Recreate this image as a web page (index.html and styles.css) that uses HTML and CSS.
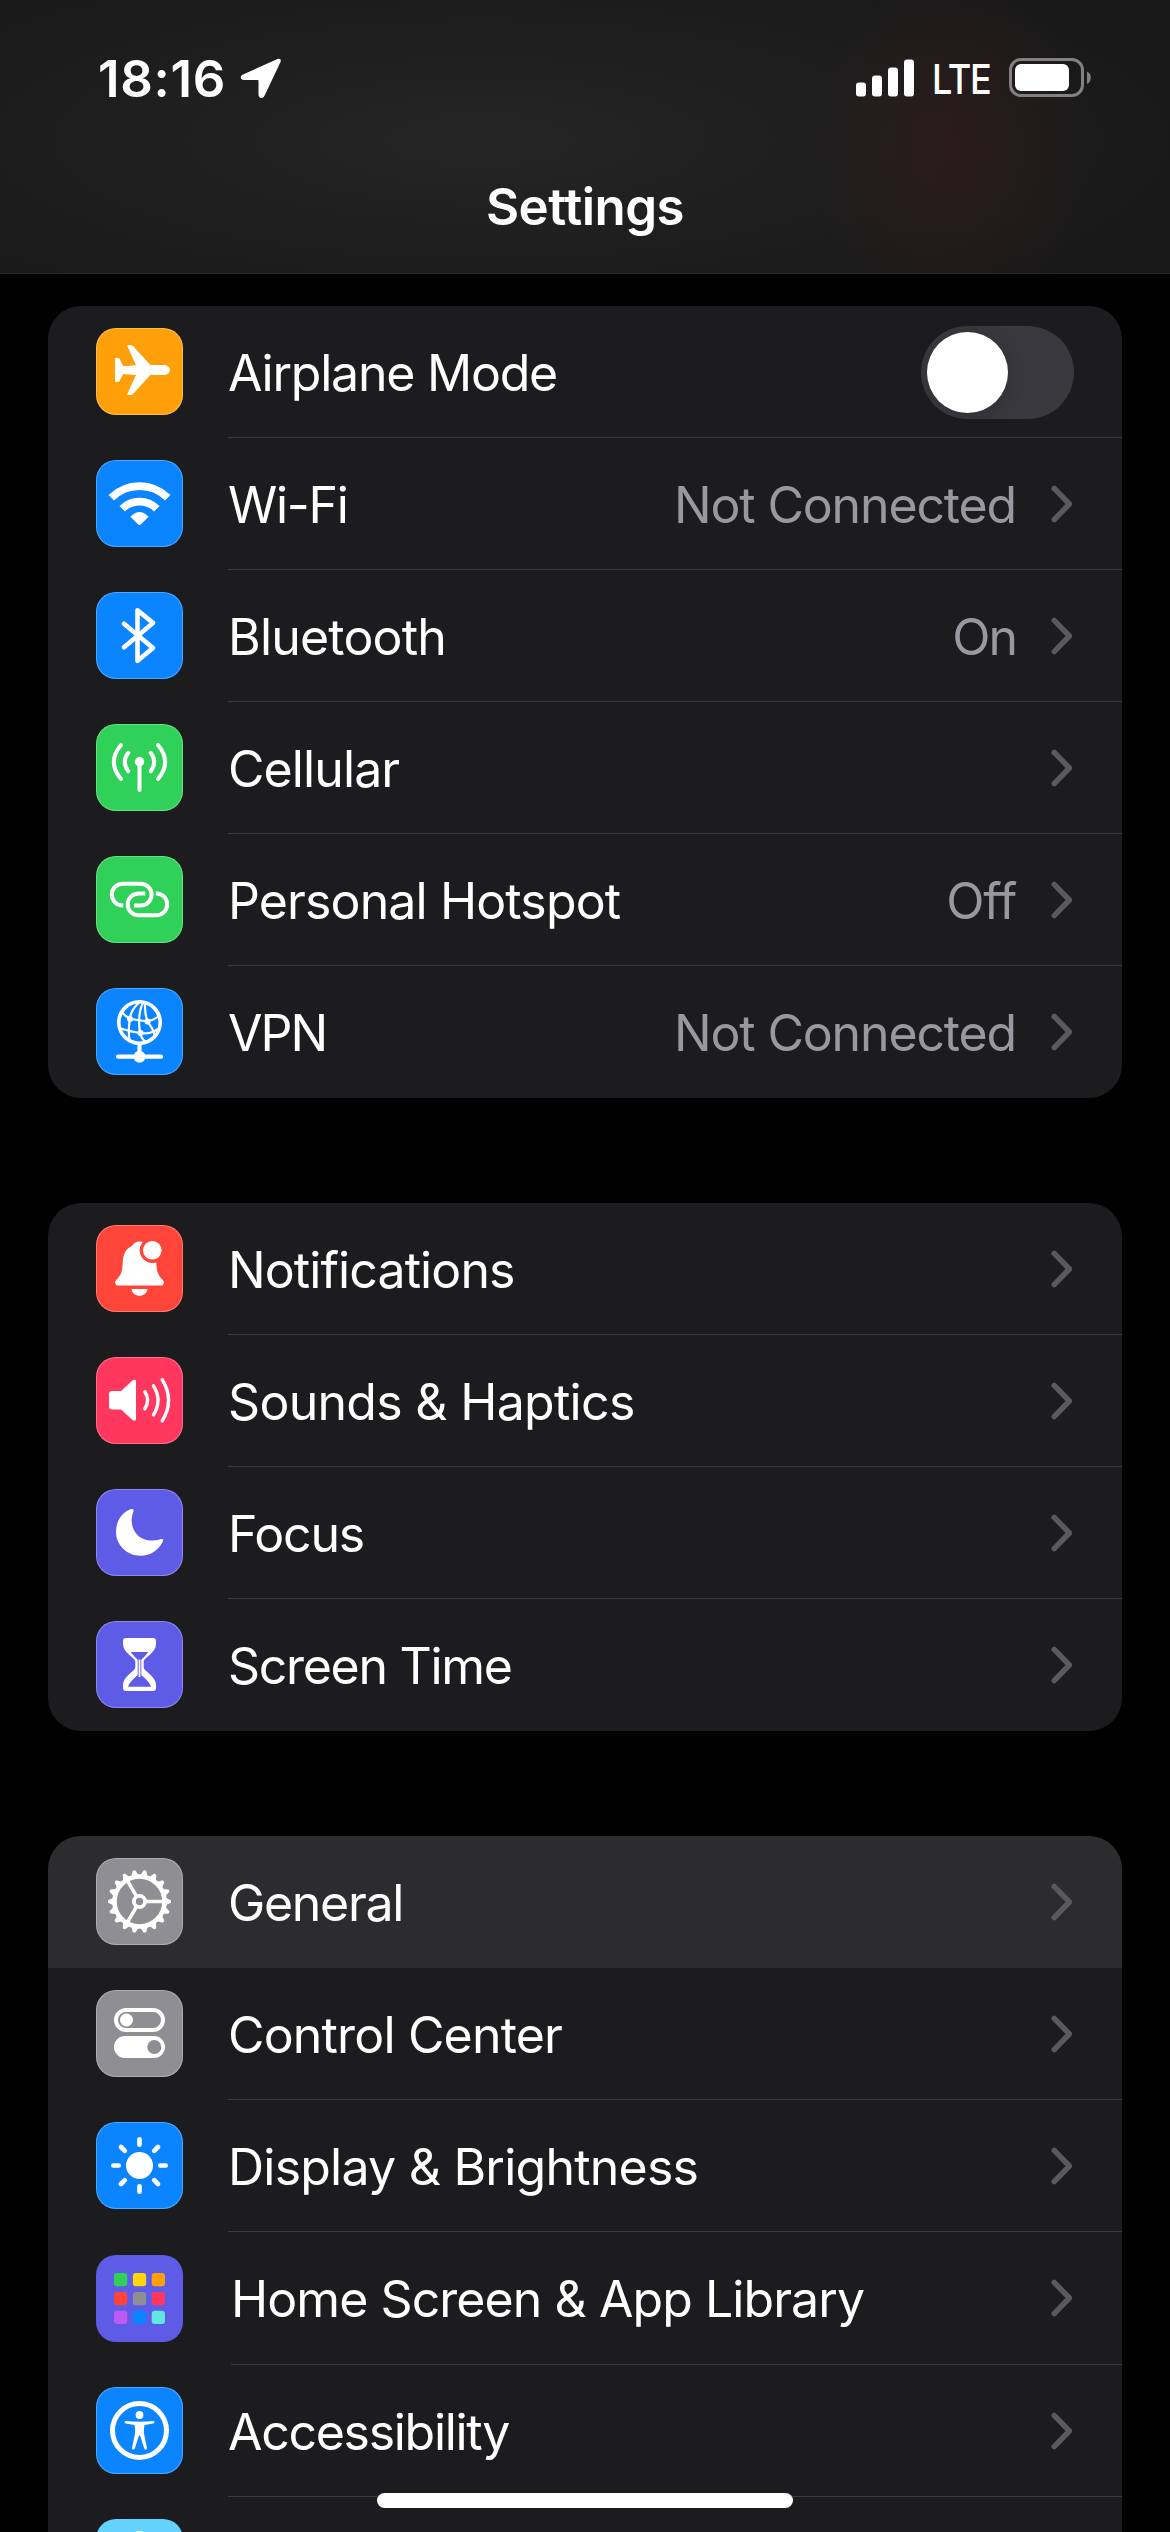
FILE: index.html
```html
<!DOCTYPE html>
<html lang="en">
<head>
<meta charset="utf-8">
<title>Settings</title>
<link rel="stylesheet" href="styles.css">
</head>
<body>
<svg class="defs" aria-hidden="true">
  <symbol id="chevron" viewBox="0 0 22 38"><path d="M3.2 3.400 18.400 19 3.200 34.600" fill="none" stroke="#5a5a5e" stroke-width="5.400" stroke-linecap="round" stroke-linejoin="round"/></symbol>
</svg>
<div class="screen">
  <header class="header">
    <div class="status">
      <span class="time">18:16</span>
      <svg class="location" viewBox="0 0 42 42"><path d="M37.500 2 3 17.500C-.5 19.200.3 23 4 23H17.500c.7 0 1 .3 1 1V37.500c0 4 4.300 4.700 6 1.200L40.500 5c1-2.500-.6-4-3-3Z" fill="#fff"/></svg>
      <svg class="signal" viewBox="0 0 58 38"><g fill="#fff"><rect x="0" y="23.500" width="10" height="14" rx="3"/><rect x="16" y="16.500" width="10" height="21" rx="3"/><rect x="32" y="8.500" width="10" height="29" rx="3"/><rect x="48" y="0.500" width="10" height="37" rx="3"/></g></svg>
      <span class="network">LTE</span>
      <svg class="battery" viewBox="0 0 83 40"><rect x="1.500" y="1.500" width="72" height="36" rx="10.500" fill="none" stroke="#828080" stroke-width="3"/><rect x="6" y="6" width="54" height="27" rx="6" fill="#fff"/><path d="M78 13.500c5 1.500 5 10.500 0 12.500Z" fill="#828080"/></svg>
    </div>
    <h1 class="title">Settings</h1>
  </header>

  <main class="groups">
    <section class="group">
      <div class="row">
        <span class="icon orange"><svg viewBox="0 0 87 87"><path d="M54.300 37H68c3.500 0 6 2.500 6 5s-2.500 5-6 5H54.300L37.500 65.500Q36 67 34 67H32Q31 67 31.400 65.800L40 47 27.300 46 23.500 53Q23 54 21.500 54H20Q19 54 19 53V31Q19 30 20 30h1.500Q23 30 23.500 31L27.300 38.200 40 37.300 31.400 18.200Q31 17 32 17h2q2 0 3.500 1.500Z" fill="#fff"/></svg></span>
        <div class="cell"><span class="label airplane">Airplane Mode</span><span class="toggle"><span class="knob"></span></span></div>
      </div>
      <div class="row">
        <span class="icon blue"><svg viewBox="0 0 87 87"><g fill="none" stroke="#fff" stroke-width="7.800"><path d="M15.300 37.800a40 40 0 0 1 56.400 0"/><path d="M26.200 48.700a24.500 24.500 0 0 1 34.600 0"/></g><path d="M34.400 56.800Q43.500 47.200 52.600 56.800L44.500 64.700q-1 .8-2 0Z" fill="#fff"/></svg></span>
        <div class="cell"><span class="label wifi">Wi-Fi</span><span class="value">Not Connected</span><svg class="chevron"><use href="#chevron"/></svg></div>
      </div>
      <div class="row">
        <span class="icon blue"><svg viewBox="0 0 87 87"><path d="M28 31.800 57 55.900 41.500 68.800V18.200L57 30.900 28 55.200" fill="none" stroke="#fff" stroke-width="4.600" stroke-linecap="round" stroke-linejoin="round"/></svg></span>
        <div class="cell"><span class="label bluetooth">Bluetooth</span><span class="value on">On</span><svg class="chevron"><use href="#chevron"/></svg></div>
      </div>
      <div class="row">
        <span class="icon green"><svg viewBox="0 0 87 87"><circle cx="43.500" cy="37.700" r="4.700" fill="#fff"/><g fill="none" stroke="#fff" stroke-width="4" stroke-linecap="round"><path d="M43.500 38V66"/><path d="M32.300 28.800Q25.300 38 32.300 47.200M54.700 28.800Q61.700 38 54.700 47.200M25 21Q10.700 38 25 55M62 21Q76.300 38 62 55"/></g></svg></span>
        <div class="cell"><span class="label cellular">Cellular</span><svg class="chevron"><use href="#chevron"/></svg></div>
      </div>
      <div class="row">
        <span class="icon green"><svg viewBox="0 0 87 87"><path d="M27.300 49.500H26.700a10.900 10.900 0 0 1 0-21.800H44.700a10.900 10.900 0 0 1 0 21.800H38M49.300 37.500H42.600a10.900 10.900 0 0 0 0 21.800H60.300a10.900 10.900 0 0 0 0-21.800H59.700" fill="none" stroke="#fff" stroke-width="4"/></svg></span>
        <div class="cell"><span class="label hotspot">Personal Hotspot</span><span class="value">Off</span><svg class="chevron"><use href="#chevron"/></svg></div>
      </div>
      <div class="row">
        <span class="icon blue"><svg viewBox="0 0 87 87"><g fill="none" stroke="#fff"><circle cx="43.500" cy="34.500" r="20.700" stroke-width="3.600"/><path stroke-width="2.200" d="M43.500 14C37 20 34 26 33.600 32S32 44 33.500 52M47 15C43 22 42.500 34 43.700 42S46 50 49.500 54M49 15.500C49 23 49 29 52 34S58 42 58.500 48M26 24.500C31 30 35 31 41 32S54 35 62.500 28.500M24 40C31 43 36 43.500 44 45S57 44 62.500 41"/><path d="M43.500 56V64" stroke-width="4.200"/><path d="M22 68.700H65" stroke-width="4.200" stroke-linecap="round"/></g><g fill="#fff"><circle cx="43.500" cy="68.700" r="6"/><circle cx="34" cy="31" r="3"/><circle cx="51.500" cy="33.500" r="3"/><circle cx="44.500" cy="45" r="3"/></g></svg></span>
        <div class="cell"><span class="label vpn">VPN</span><span class="value">Not Connected</span><svg class="chevron"><use href="#chevron"/></svg></div>
      </div>
    </section>

    <section class="group">
      <div class="row">
        <span class="icon red"><svg viewBox="0 0 87 87"><path d="M22.500 60.600c-3.500 0-4.500-3.500-1.800-6C25.200 50 26.400 46 26.700 38 27 30 29 24 36 21c1.500-3 4-4.500 7.500-4.500s6 1.500 7.500 4.500c7 3 9 9 9.300 17 .3 8 1.500 12 6 16.600 2.700 2.500 1.700 6-1.800 6Z" fill="#fff"/><circle cx="56.300" cy="25.300" r="12.600" fill="#ff453a"/><circle cx="56.300" cy="25.300" r="9.300" fill="#fff"/><path d="M35.500 64H51.500C50.500 73 36.500 73 35.500 64Z" fill="#fff"/></svg></span>
        <div class="cell"><span class="label notifications">Notifications</span><svg class="chevron"><use href="#chevron"/></svg></div>
      </div>
      <div class="row">
        <span class="icon pink"><svg viewBox="0 0 87 87"><path d="M16 34H25L36.500 23.500Q40 21.500 40 25V61.500Q40 65 36.500 63L25 52.500H16q-3 0-3-3V37q0-3 3-3Z" fill="#fff"/><path d="M48.800 34.800Q54.500 43.300 48.800 51.800M57.500 28.800Q66.500 43.300 57.500 57.800M66.200 22.700Q79 43.300 66.200 63.900" fill="none" stroke="#fff" stroke-width="3.400" stroke-linecap="round"/></svg></span>
        <div class="cell"><span class="label sounds">Sounds &amp; Haptics</span><svg class="chevron"><use href="#chevron"/></svg></div>
      </div>
      <div class="row">
        <span class="icon indigo"><svg viewBox="0 0 87 87"><path d="M34.500 20.300C36.500 19.500 38 20.300 37.400 22.300 34 32 36 40 41 45.500 46.500 51.500 56 53 64.500 50.200 66.500 49.600 67.500 50.600 66.800 52.400 62.500 61.500 54 66.700 44.500 66.700 31 66.700 20 56 20 43 20 32 26 23.500 34.500 20.300Z" fill="#fff"/></svg></span>
        <div class="cell"><span class="label focus">Focus</span><svg class="chevron"><use href="#chevron"/></svg></div>
      </div>
      <div class="row">
        <span class="icon indigo"><svg viewBox="0 0 87 87"><path d="M30 17H57q3 0 3 3v3C60 32 47.700 37 47.700 40.500V46.500C47.700 50 60 55 60 64v3q0 3-3 3H30q-3 0-3-3V64C27 55 39.300 50 39.300 46.500V40.500C39.300 37 27 32 27 23V20q0-3 3-3Z" fill="#fff"/><path d="M34.700 31H52.300Q49 35.500 45.300 38.800V54Q54 61.500 55 65.700H32Q33 61.500 41.700 54V38.800Q38 35.500 34.700 31Z" fill="#5e5ce6"/><path d="M43.500 38.500V56" stroke="#fff" stroke-width="1.700"/></svg></span>
        <div class="cell"><span class="label screentime">Screen Time</span><svg class="chevron"><use href="#chevron"/></svg></div>
      </div>
    </section>

    <section class="group">
      <div class="row selected">
        <span class="icon gray"><svg viewBox="0 0 87 87"><defs><path id="tooth" d="M69 39.500 75 42.300V44.700L69 47.500Z" fill="#fff"/><g id="teeth3"><use href="#tooth"/><use href="#tooth" transform="rotate(20 43.500 43.500)"/><use href="#tooth" transform="rotate(40 43.500 43.500)"/></g></defs><use href="#teeth3"/><use href="#teeth3" transform="rotate(60 43.500 43.500)"/><use href="#teeth3" transform="rotate(120 43.500 43.500)"/><use href="#teeth3" transform="rotate(180 43.500 43.500)"/><use href="#teeth3" transform="rotate(240 43.500 43.500)"/><use href="#teeth3" transform="rotate(300 43.500 43.500)"/><g fill="none" stroke="#fff"><circle cx="43.500" cy="43.500" r="25" stroke-width="4.600"/><circle cx="43.500" cy="43.500" r="5.600" stroke-width="3.900"/><path d="M50 43.500H68M40.250 49.130 31.250 64.700M40.250 37.870 31.250 22.300" stroke-width="3.600"/></g></svg></span>
        <div class="cell"><span class="label general">General</span><svg class="chevron"><use href="#chevron"/></svg></div>
      </div>
      <div class="row">
        <span class="icon gray"><svg viewBox="0 0 87 87"><rect x="20" y="20" width="47" height="20" rx="10" fill="none" stroke="#fff" stroke-width="4"/><circle cx="30.500" cy="30" r="6.500" fill="#fff"/><rect x="18" y="46" width="51" height="22" rx="11" fill="#fff"/><circle cx="58.300" cy="57" r="7" fill="#8e8e93"/></svg></span>
        <div class="cell"><span class="label control">Control Center</span><svg class="chevron"><use href="#chevron"/></svg></div>
      </div>
      <div class="row">
        <span class="icon blue"><svg viewBox="0 0 87 87"><circle cx="43.500" cy="43.500" r="13.500" fill="#fff"/><path d="M43.500 17.300V22.700M43.500 64.300V69.700M17.300 43.500H22.700M64.300 43.500H69.700M25 25 28.800 28.800M58.200 58.200 62 62M25 62 28.800 58.200M58.200 28.800 62 25" stroke="#fff" stroke-width="4.700" stroke-linecap="round"/></svg></span>
        <div class="cell"><span class="label display">Display &amp; Brightness</span><svg class="chevron"><use href="#chevron"/></svg></div>
      </div>
      <div class="row tall">
        <span class="icon indigo plain"><svg viewBox="0 0 87 87"><rect x="18" y="18" width="13.300" height="13.300" rx="3" fill="#30d158"/><rect x="36.900" y="18" width="13.300" height="13.300" rx="3" fill="#ffd60a"/><rect x="55.700" y="18" width="13.300" height="13.300" rx="3" fill="#ff9f0a"/><rect x="18" y="36.900" width="13.300" height="13.300" rx="3" fill="#ff453a"/><rect x="36.900" y="36.900" width="13.300" height="13.300" rx="3" fill="#8e8e93"/><rect x="55.700" y="36.900" width="13.300" height="13.300" rx="3" fill="#ff375f"/><rect x="18" y="55.700" width="13.300" height="13.300" rx="3" fill="#bf5af2"/><rect x="36.900" y="55.700" width="13.300" height="13.300" rx="3" fill="#0a84ff"/><rect x="55.700" y="55.700" width="13.300" height="13.300" rx="3" fill="#63e6e2"/></svg></span>
        <div class="cell"><span class="label home">Home Screen &amp; App Library</span><svg class="chevron"><use href="#chevron"/></svg></div>
      </div>
      <div class="row">
        <span class="icon blue"><svg viewBox="0 0 87 87"><circle cx="43.500" cy="43.500" r="27" fill="none" stroke="#fff" stroke-width="5"/><circle cx="43.500" cy="28" r="3.900" fill="#fff"/><path d="M30 34Q43.500 35.500 57 34C58.800 33.800 59 36.300 57.300 36.600L48.500 38Q47.500 42 48 46.500L51 61C51.300 62.800 48.700 63.200 48.200 61.600L44.200 49Q43.500 47.600 42.800 49L38.800 61.600C38.300 63.200 35.700 62.800 36 61L39 46.500Q39.500 42 38.500 38L29.700 36.600C28 36.300 28.200 33.800 30 34Z" fill="#fff"/></svg></span>
        <div class="cell"><span class="label accessibility">Accessibility</span><svg class="chevron"><use href="#chevron"/></svg></div>
      </div>
      <div class="row">
        <span class="icon cyan plain"><svg viewBox="0 0 87 87"><circle cx="43.500" cy="21" r="9" fill="#fff"/></svg></span>
        <div class="cell"></div>
      </div>
    </section>
  </main>
  <div class="home-indicator"></div>
</div>
</body>
</html>
```
FILE: styles.css
```css
* { box-sizing: border-box; }
body { margin: 0; background: #000; }
.defs { display: none; }
.screen {
  position: relative;
  width: 1170px;
  height: 2532px;
  overflow: hidden;
  background: #000;
  color: #fff;
  font-family: Inter, "Liberation Sans", sans-serif;
}

.header {
  height: 274px;
  border-bottom: 1px solid #272727;
  background:
    radial-gradient(ellipse 150px 190px at 950px 150px, rgba(70, 26, 28, .34), rgba(70, 26, 28, .2) 45%, rgba(70, 26, 28, .06) 75%, transparent),
    radial-gradient(ellipse 750px 210px at 480px 140px, rgba(40, 40, 40, .8), transparent),
    #181818;
}
.status { display: flex; align-items: center; height: 156px; padding-left: 98px; }
.time { width: 142px; font-size: 51px; font-weight: 600; letter-spacing: .7px; white-space: nowrap; }
.location { width: 42px; height: 42px; }
.signal { width: 58px; height: 38px; margin-left: 574px; }
.network { width: 77px; margin: 1px 0 0 18px; font-size: 41px; font-weight: 500; letter-spacing: -1.500px; transform: scaleX(.88); transform-origin: left; }
.battery { width: 83px; height: 40px; }
.title { margin: 21px 0 0; text-align: center; font-size: 51px; line-height: 60px; font-weight: 600; letter-spacing: -.5px; }

.groups { display: flex; flex-direction: column; gap: 105px; padding: 32px 48px 0; }
.group { overflow: hidden; border-radius: 33px; background: #1c1c1e; }
.row { display: flex; height: 132px; padding-left: 48px; }
.tall { height: 133px; }
.tall .icon { margin-top: 23px; }
.selected { background: #2c2c2e; }
.icon { flex: none; width: 87px; height: 87px; margin-top: 22px; border-radius: 20px; box-shadow: inset 0 0 0 1px rgba(255, 255, 255, .28); }
.plain { box-shadow: none; }
.icon svg { display: block; width: 87px; height: 87px; }
.orange { background: #ff9f0a; }
.blue { background: #0a84ff; }
.green { background: #30d158; }
.red { background: #ff453a; }
.pink { background: #ff375f; }
.indigo { background: #5e5ce6; }
.gray { background: #8e8e93; }
.cyan { background: #64d2ff; }

.cell { display: flex; flex: 1; align-items: center; margin-left: 45px; padding-right: 48px; border-bottom: 1px solid #3b3b3e; }
.row:last-child .cell, .selected .cell { border-color: transparent; }
.tall .cell { margin-left: 48px; }
.label, .value { font-size: 50px; line-height: 60px; white-space: nowrap; padding-top: 2px; }
.label { flex: 1; }
.airplane { letter-spacing: -1.230px; }
.wifi { letter-spacing: -1.300px; }
.bluetooth { letter-spacing: -.8px; }
.cellular { letter-spacing: -.9px; }
.hotspot { letter-spacing: -.87px; }
.vpn { letter-spacing: -2px; }
.notifications { letter-spacing: -.9px; }
.sounds { letter-spacing: -.7px; }
.focus { letter-spacing: -1.200px; }
.screentime { letter-spacing: -1.300px; }
.general { letter-spacing: -1.300px; }
.control { letter-spacing: -.83px; }
.display { letter-spacing: -.77px; }
.home { letter-spacing: -.93px; }
.accessibility { letter-spacing: -1.300px; }
.value { margin-right: 35px; color: #98989f; letter-spacing: -1.150px; }
.on { letter-spacing: -2px; }
.chevron { flex: none; width: 22px; height: 38px; margin-right: 1px; }
.toggle { width: 153px; height: 93px; border-radius: 47px; background: #39393d; padding: 6px; margin-top: 2px; }
.knob { display: block; width: 81px; height: 81px; border-radius: 50%; background: #fff; box-shadow: 0 3px 18px rgba(0, 0, 0, .15); }

.home-indicator { position: absolute; left: 377px; top: 2493px; width: 416px; height: 15px; border-radius: 8px; background: #fff; }
```
